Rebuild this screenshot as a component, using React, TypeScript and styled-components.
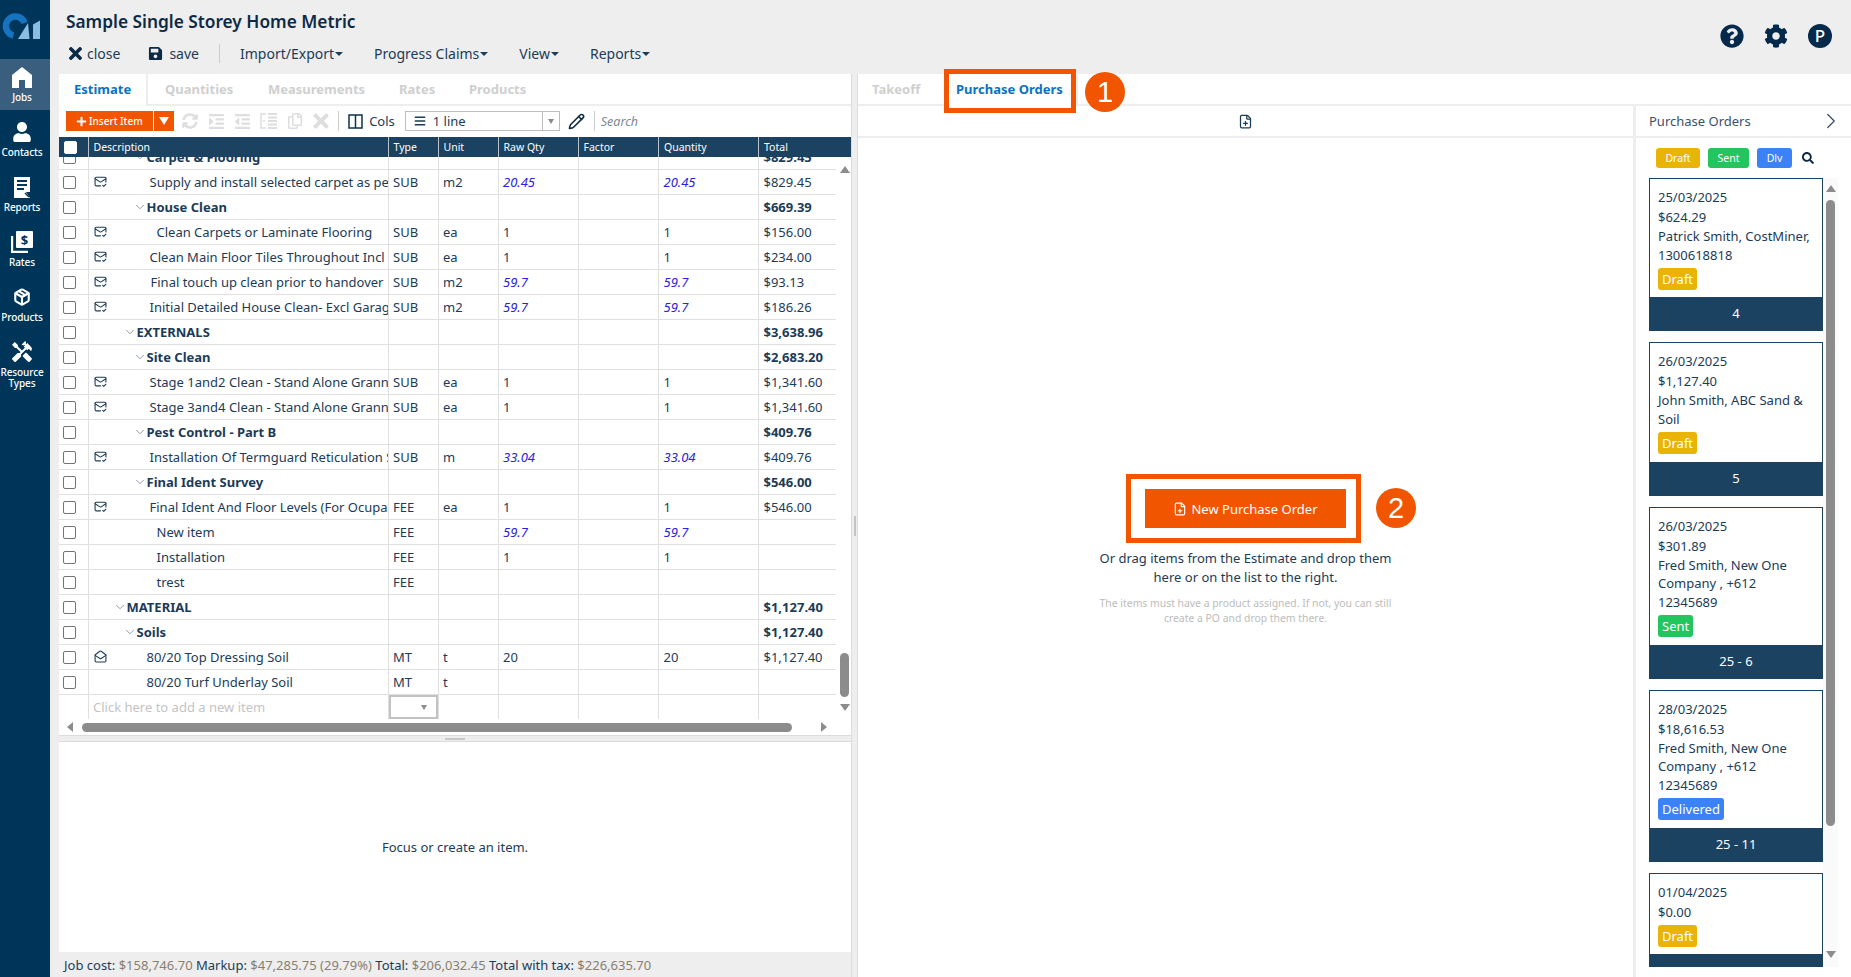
import React from "react";
import styled, { createGlobalStyle } from "styled-components";
import {
  FaBars,
  FaCog,
  FaIndent,
  FaOutdent,
  FaPlus,
  FaQuestionCircle,
  FaRegCopy,
  FaSave,
  FaSearch,
  FaSyncAlt,
  FaTimes,
  FaUser,
} from "react-icons/fa";
import { MdHandyman } from "react-icons/md";
import { ChevronDown, ChevronRight, FilePlus, MailCheck, MailOpen, Package, Pencil } from "lucide-react";

const NAVY = "#10304c";
const HEADER = "#1c4261";
const ORANGE = "#f25500";
const BLUE = "#0c72bf";
const LINE = "#e0e0e0";
const PANEL = "#eeeeee";

const GlobalStyle = createGlobalStyle`
  html, body, #root { margin: 0; padding: 0; height: 100%; }
  body { font-family: "Noto Sans", "Open Sans", sans-serif; color: ${NAVY}; overflow: hidden; }
  * { box-sizing: border-box; }
`;

const Page = styled.div`
  display: flex;
  width: 1851px;
  height: 977px;
  overflow: hidden;
  background: ${PANEL};
`;

/* left navigation */
const Sidebar = styled.nav`
  flex: 0 0 50px;
  background: #00355a;
  display: flex;
  flex-direction: column;
`;
const LogoBox = styled.div`
  height: 59px;
`;
const NavItem = styled.div<{ $active?: boolean }>`
  height: 55px;
  padding: 5px 6px 0 0;
  display: flex;
  flex-direction: column;
  align-items: center;
  color: #fff;
  background: ${({ $active }) => ($active ? "linear-gradient(#3a5e7d 51px, transparent 51px)" : "none")};
`;
const NavIcon = styled.div`
  height: 26px;
  display: flex;
  align-items: center;
  justify-content: center;
`;
const NavLabel = styled.div`
  font-size: 10px;
  line-height: 11px;
  margin-top: 2px;
  text-align: center;
  font-weight: 500;
  letter-spacing: -0.1px;
`;

/* top bar */
const Main = styled.div`
  flex: 1;
  min-width: 0;
  display: flex;
  flex-direction: column;
`;
const TopBar = styled.header`
  flex: 0 0 74px;
  display: flex;
  justify-content: space-between;
  padding: 10px 0 0 16px;
`;
const Title = styled.h1`
  margin: 0;
  font-size: 17.3px;
  line-height: 24px;
  font-weight: 600;
  color: #0d2a45;
`;
const Menu = styled.div`
  display: flex;
  align-items: center;
  margin-top: 7px;
  height: 24px;
  font-size: 14px;
  color: #1c3b57;
`;
const MenuAction = styled.span<{ $gap: number; $iconGap?: number }>`
  display: inline-flex;
  align-items: center;
  gap: ${({ $iconGap }) => $iconGap ?? 6}px;
  margin-right: ${({ $gap }) => $gap}px;
  svg { color: #0d2a45; }
`;
const MenuDivider = styled.span`
  width: 1px;
  height: 19px;
  background: #ccc;
  margin-right: 20px;
`;
const Caret = styled.span`
  display: inline-block;
  width: 0;
  height: 0;
  margin-left: 1px;
  vertical-align: 3px;
  border-left: 4px solid transparent;
  border-right: 4px solid transparent;
  border-top: 4px solid #1c3b57;
`;
const TopIcons = styled.div`
  display: flex;
  gap: 20px;
  padding: 14px 19px 0 0;
  color: #05294a;
`;
const Avatar = styled.div`
  width: 24px;
  height: 24px;
  border-radius: 50%;
  background: #05294a;
  color: #fff;
  font-size: 17px;
  font-weight: 500;
  line-height: 24px;
  text-align: center;
`;

/* panes */
const Body = styled.div`
  flex: 1;
  min-height: 0;
  display: flex;
`;
const LeftPane = styled.section`
  flex: 0 0 792px;
  margin-left: 9px;
  display: flex;
  flex-direction: column;
`;
const PaneSplit = styled.div`
  flex: 0 0 7px;
  display: flex;
  align-items: center;
  justify-content: center;
  border-left: 1px solid #dcdcdc;
  border-right: 1px solid #dcdcdc;
  &::after {
    content: "";
    width: 2px;
    height: 20px;
    background: #c4c4c4;
  }
`;
const RightPane = styled.section`
  flex: 1;
  min-width: 0;
  background: #fff;
  display: flex;
  flex-direction: column;
`;

/* tabs */
const TabStrip = styled.div`
  flex: 0 0 32px;
  min-height: 0;
  display: flex;
  background: #fff;
  border-bottom: 2px solid ${PANEL};
`;
const Tab = styled.div<{ $active?: boolean; $width: number; $pad: number }>`
  position: relative;
  flex: 0 0 ${({ $width }) => $width}px;
  padding-left: ${({ $pad }) => $pad}px;
  height: ${({ $active }) => ($active ? "32px" : "30px")};
  font-size: 13px;
  line-height: 30px;
  font-weight: 700;
  color: ${({ $active }) => ($active ? BLUE : "#cfcfcf")};
  border-right: ${({ $active }) => ($active ? `2px solid ${PANEL}` : "none")};
  background: #fff;
`;
const Highlight = styled.div`
  position: absolute;
  left: 0;
  top: -5px;
  width: 132px;
  height: 44px;
  border: 5px solid ${ORANGE};
`;
const Marker = styled.div`
  position: absolute;
  width: 40px;
  height: 40px;
  border-radius: 50%;
  background: ${ORANGE};
  color: #fff;
  font-family: "Liberation Sans", sans-serif;
  font-weight: 400;
  font-size: 29px;
  line-height: 40px;
  text-align: center;
`;
const TabMarker = styled(Marker)`
  left: 141px;
  top: -2px;
`;

/* estimate toolbar */
const ToolRow = styled.div`
  flex: 0 0 31px;
  display: flex;
  align-items: center;
  padding: 0 0 1px 7px;
  background: #fff;
`;
const InsertButton = styled.button`
  height: 20px;
  width: 87px;
  border: 0;
  padding: 0 0 0 10px;
  background: ${ORANGE};
  color: #fff;
  font-family: inherit;
  font-size: 10px;
  font-weight: 500;
  display: flex;
  align-items: center;
  gap: 2px;
`;
const DropButton = styled.button`
  height: 20px;
  width: 20px;
  margin: 0 3px 0 1px;
  border: 0;
  padding: 0;
  background: ${ORANGE};
  display: flex;
  align-items: center;
  justify-content: center;
  &::after {
    content: "";
    border-left: 5px solid transparent;
    border-right: 5px solid transparent;
    border-top: 8px solid #fff;
  }
`;
const DimIcon = styled.span`
  flex: 0 0 26.2px;
  display: flex;
  justify-content: center;
  color: #dedede;
`;
const ToolDivider = styled.span<{ $left: number; $right: number }>`
  width: 1px;
  height: 20px;
  background: #ccc;
  margin: 0 ${({ $right }) => $right}px 0 ${({ $left }) => $left}px;
`;
const ColsLabel = styled.span`
  font-size: 13px;
  color: #1c3b57;
  margin: 0 10px 0 6px;
`;
const LineSelect = styled.div`
  width: 155px;
  height: 20px;
  border: 1px solid #bdbdbd;
  display: flex;
  align-items: center;
  padding-left: 8px;
  gap: 7px;
  font-size: 13px;
  color: #1c3b57;
`;
const SelectArrow = styled.span`
  margin-left: auto;
  width: 17px;
  height: 100%;
  border-left: 1px solid #bdbdbd;
  display: flex;
  align-items: center;
  justify-content: center;
  &::after {
    content: "";
    border-left: 3px solid transparent;
    border-right: 3px solid transparent;
    border-top: 5px solid #8a8a8a;
  }
`;
const PencilSlot = styled.span`
  display: flex;
  margin: 0 9px 0 8px;
  color: #0d2a45;
`;
const SearchInput = styled.span`
  margin-left: 6px;
  font-size: 12.5px;
  font-style: italic;
  color: #7d8a95;
`;

/* grid */
const COLUMNS = "29.5px 300px 50px 60px 80px 80.5px 100px";

const HeadRow = styled.div`
  flex: 0 0 20px;
  display: grid;
  grid-template-columns: ${COLUMNS} 1fr;
  background: ${HEADER};
  color: #fff;
  font-size: 10.5px;
  line-height: 20px;
`;
const HeadCell = styled.div`
  padding-left: 5px;
  border-right: 1px solid #b9c3cc;
  &:last-child { border-right: 0; }
`;
const HeadCheckCell = styled(HeadCell)`
  padding: 4px 0 0 5px;
`;
const RowsArea = styled.div`
  flex: 0 0 562px;
  display: flex;
  background: #fff;
  overflow: hidden;
`;
const RowsClip = styled.div`
  flex: 0 0 777px;
  overflow: hidden;
`;
const RowsList = styled.div`
  margin-top: -12px;
`;
const Row = styled.div`
  display: grid;
  grid-template-columns: ${COLUMNS} 77px;
  height: 25px;
  border-bottom: 1px solid ${LINE};
`;
const Cell = styled.div<{ $bold?: boolean; $qty?: boolean }>`
  padding-left: 4.5px;
  border-right: 1px solid ${LINE};
  font-size: 13px;
  line-height: 24px;
  white-space: nowrap;
  overflow: hidden;
  color: ${({ $qty }) => ($qty ? "#2a22e0" : "#1c3b57")};
  font-style: ${({ $qty }) => ($qty ? "italic" : "normal")};
  font-weight: ${({ $bold }) => ($bold ? 700 : 400)};
  &:last-child { border-right: 0; }
`;
const CheckCell = styled(Cell)`
  padding: 6px 0 0 4px;
`;
const Check = styled.span<{ $filled?: boolean }>`
  display: block;
  width: 13px;
  height: 13px;
  border-radius: 2px;
  background: #fff;
  border: 1px solid ${({ $filled }) => ($filled ? "#fff" : "#6f7478")};
`;
const DescCell = styled(Cell)`
  display: flex;
  padding-left: 0;
`;
const MailSlot = styled.span`
  flex: 0 0 24px;
  padding: 5px 0 0 5px;
  color: #1c3b57;
  display: flex;
  align-items: flex-start;
`;
const DescText = styled.span<{ $x: number; $group?: boolean }>`
  padding-left: ${({ $x, $group }) => $x - 24 - ($group ? 12 : 0)}px;
  display: inline-flex;
  align-items: center;
`;
const TreeToggle = styled.span`
  flex: 0 0 12px;
  width: 12px;
  margin-left: -2px;
  margin-right: 2px;
  display: flex;
  color: #6d7e8c;
  svg { flex: none; }
`;
const EditorCell = styled(Cell)`
  padding-left: 0;
`;
const Placeholder = styled.span`
  color: #c4c4c4;
`;
const TypeEditor = styled.div`
  height: 24px;
  border: 2px solid #c2c2c2;
  display: flex;
  align-items: center;
  justify-content: flex-end;
  padding-right: 9px;
  &::after {
    content: "";
    border-left: 3px solid transparent;
    border-right: 3px solid transparent;
    border-top: 5px solid #8a8a8a;
  }
`;
const VTrack = styled.div`
  flex: 0 0 15px;
  display: flex;
  flex-direction: column;
  align-items: center;
  padding-left: 2px;
`;
const ArrowUp = styled.span<{ $top: number }>`
  margin-top: ${({ $top }) => $top}px;
  border-left: 5px solid transparent;
  border-right: 5px solid transparent;
  border-bottom: 7px solid #8c8c8c;
`;
const ArrowDown = styled.span<{ $top: number }>`
  margin-top: ${({ $top }) => $top}px;
  border-left: 5px solid transparent;
  border-right: 5px solid transparent;
  border-top: 7px solid #8c8c8c;
`;
const VThumb = styled.span<{ $top: number; $height: number }>`
  margin-top: ${({ $top }) => $top}px;
  width: 9px;
  height: ${({ $height }) => $height}px;
  border-radius: 5px;
  background: #8c8c8c;
`;
const HTrack = styled.div`
  flex: 0 0 17px;
  display: flex;
  align-items: center;
  background: #fff;
  padding-left: 8px;
  border-bottom: 1px solid #dcdcdc;
`;
const ArrowLeft = styled.span`
  border-top: 5px solid transparent;
  border-bottom: 5px solid transparent;
  border-right: 6px solid #8c8c8c;
`;
const HThumb = styled.span`
  width: 710px;
  height: 9px;
  margin-left: 9px;
  border-radius: 5px;
  background: #8c8c8c;
`;
const ArrowRight = styled.span`
  margin-left: 29px;
  border-top: 5px solid transparent;
  border-bottom: 5px solid transparent;
  border-left: 6px solid #8c8c8c;
`;
const RowSplit = styled.div`
  flex: 0 0 6px;
  display: flex;
  align-items: center;
  justify-content: center;
  border-bottom: 1px solid #dcdcdc;
  &::after {
    content: "";
    width: 20px;
    height: 2px;
    background: #c8c8c8;
  }
`;
const Detail = styled.div`
  flex: 0 0 210px;
  background: #fff;
  display: flex;
  align-items: center;
  justify-content: center;
  font-size: 13px;
  color: #1c3b57;
`;
const Totals = styled.footer`
  flex: 1;
  padding: 2px 0 0 5px;
  font-size: 13px;
  line-height: 22px;
  color: #1c3b57;
  white-space: pre;
`;
const Amount = styled.span`
  color: #887f72;
`;

/* purchase orders */
const OrdersBody = styled.div`
  flex: 1;
  min-height: 0;
  display: flex;
`;
const Center = styled.div`
  flex: 0 0 775px;
  display: flex;
  flex-direction: column;
`;
const CenterBar = styled.div`
  flex: 0 0 32px;
  display: flex;
  align-items: center;
  justify-content: center;
  border-bottom: 2px solid ${PANEL};
  color: #1c3b57;
`;
const DropArea = styled.div`
  display: flex;
  flex-direction: column;
  align-items: center;
  padding-top: 336px;
  text-align: center;
`;
const ButtonFrame = styled.div`
  position: relative;
  width: 235px;
  height: 69px;
  margin-left: -4px;
  padding-left: 14px;
  border: 5px solid ${ORANGE};
  display: flex;
  align-items: center;
`;
const FrameMarker = styled(Marker)`
  left: 245px;
  top: 9px;
`;
const NewOrderButton = styled.button`
  width: 201px;
  height: 39px;
  border: 0;
  background: ${ORANGE};
  color: #fff;
  font-family: inherit;
  font-size: 13px;
  display: flex;
  align-items: center;
  justify-content: center;
  gap: 4px;
`;
const DropHint = styled.p`
  margin: 6px 0 0;
  width: 300px;
  font-size: 13px;
  line-height: 19px;
  color: #1c3b57;
`;
const DropNote = styled.p`
  margin: 9px 0 0;
  width: 300px;
  font-size: 10.4px;
  line-height: 15px;
  color: #bcbcbc;
`;
const OrdersColumn = styled.aside`
  flex: 1;
  min-width: 0;
  border-left: 3px solid ${PANEL};
  display: flex;
  flex-direction: column;
`;
const OrdersTitle = styled.div`
  flex: 0 0 32px;
  display: flex;
  align-items: center;
  justify-content: space-between;
  padding: 0 7px 0 13px;
  border-bottom: 2px solid ${PANEL};
  font-size: 13px;
  color: #3a5269;
`;
const FilterRow = styled.div`
  flex: 0 0 40px;
  display: flex;
  align-items: flex-start;
  gap: 8px;
  padding: 10px 0 0 20px;
`;
const FilterPill = styled.span<{ $bg: string; $width: number }>`
  width: ${({ $width }) => $width}px;
  height: 20px;
  border-radius: 3px;
  background: ${({ $bg }) => $bg};
  color: #fff;
  font-size: 10.5px;
  line-height: 20px;
  text-align: center;
`;
const FilterSearch = styled.span`
  display: flex;
  color: #0d2a45;
  margin: 4px 0 0 2px;
`;
const ListArea = styled.div`
  flex: 0 0 789px;
  display: flex;
  overflow: hidden;
`;
const CardStack = styled.div`
  flex: 0 0 174px;
  margin-left: 13px;
  display: flex;
  flex-direction: column;
  gap: 11px;
`;
const Card = styled.article`
  flex: 0 0 auto;
  border: 1px solid ${HEADER};
  font-size: 13px;
  color: #1c3b57;
`;
const CardBody = styled.div`
  padding: 8px 8px 7.4px;
`;
const CardLine = styled.div`
  line-height: 20px;
`;
const CardMulti = styled.div`
  line-height: 18.7px;
`;
const Status = styled.span<{ $bg: string }>`
  display: block;
  width: fit-content;
  margin-top: 3.5px;
  height: 22px;
  padding: 0 4px;
  border-radius: 3px;
  background: ${({ $bg }) => $bg};
  color: #fff;
  font-size: 13px;
  line-height: 22px;
`;
const CardFoot = styled.div`
  height: 33px;
  background: ${HEADER};
  color: #fff;
  font-size: 13px;
  line-height: 33px;
  text-align: center;
`;
const ListScroll = styled(VTrack)`
  flex: 0 0 15px;
  padding-left: 0;
  background: #fafafa;
`;

const YELLOW = "#eab308";
const GREEN = "#22c55e";
const SKY = "#3b82f6";

type EstimateRow = {
  text: string;
  x: number;
  group?: boolean;
  mail?: "check" | "open";
  type?: string;
  unit?: string;
  raw?: string;
  qty?: string;
  total?: string;
  italic?: boolean;
};

const rows: EstimateRow[] = [
  { text: "Carpet & Flooring", x: 58, group: true, total: "$829.45" },
  { text: "Supply and install selected carpet as per", x: 61, mail: "check", type: "SUB", unit: "m2", raw: "20.45", qty: "20.45", total: "$829.45", italic: true },
  { text: "House Clean", x: 58, group: true, total: "$669.39" },
  { text: "Clean Carpets or Laminate Flooring", x: 68, mail: "check", type: "SUB", unit: "ea", raw: "1", qty: "1", total: "$156.00" },
  { text: "Clean Main Floor Tiles Throughout Incl", x: 61, mail: "check", type: "SUB", unit: "ea", raw: "1", qty: "1", total: "$234.00" },
  { text: "Final touch up clean prior to handover", x: 62, mail: "check", type: "SUB", unit: "m2", raw: "59.7", qty: "59.7", total: "$93.13", italic: true },
  { text: "Initial Detailed House Clean- Excl Garage", x: 61, mail: "check", type: "SUB", unit: "m2", raw: "59.7", qty: "59.7", total: "$186.26", italic: true },
  { text: "EXTERNALS", x: 48, group: true, total: "$3,638.96" },
  { text: "Site Clean", x: 58, group: true, total: "$2,683.20" },
  { text: "Stage 1and2 Clean - Stand Alone Granny Flat", x: 61, mail: "check", type: "SUB", unit: "ea", raw: "1", qty: "1", total: "$1,341.60" },
  { text: "Stage 3and4 Clean - Stand Alone Granny Flat", x: 61, mail: "check", type: "SUB", unit: "ea", raw: "1", qty: "1", total: "$1,341.60" },
  { text: "Pest Control - Part B", x: 58, group: true, total: "$409.76" },
  { text: "Installation Of Termguard Reticulation System", x: 61, mail: "check", type: "SUB", unit: "m", raw: "33.04", qty: "33.04", total: "$409.76", italic: true },
  { text: "Final Ident Survey", x: 58, group: true, total: "$546.00" },
  { text: "Final Ident And Floor Levels (For Ocupancy)", x: 61, mail: "check", type: "FEE", unit: "ea", raw: "1", qty: "1", total: "$546.00" },
  { text: "New item", x: 68, type: "FEE", raw: "59.7", qty: "59.7", italic: true },
  { text: "Installation", x: 68, type: "FEE", raw: "1", qty: "1" },
  { text: "trest", x: 68, type: "FEE" },
  { text: "MATERIAL", x: 38, group: true, total: "$1,127.40" },
  { text: "Soils", x: 48, group: true, total: "$1,127.40" },
  { text: "80/20 Top Dressing Soil", x: 58, mail: "open", type: "MT", unit: "t", raw: "20", qty: "20", total: "$1,127.40" },
  { text: "80/20 Turf Underlay Soil", x: 58, type: "MT", unit: "t" },
];

const orders = [
  { date: "25/03/2025", amount: "$624.29", lines: ["Patrick Smith, CostMiner,", "1300618818"], status: "Draft", color: YELLOW, no: "4" },
  { date: "26/03/2025", amount: "$1,127.40", lines: ["John Smith, ABC Sand &", "Soil"], status: "Draft", color: YELLOW, no: "5" },
  { date: "26/03/2025", amount: "$301.89", lines: ["Fred Smith, New One", "Company , +612", "12345689"], status: "Sent", color: GREEN, no: "25 - 6" },
  { date: "28/03/2025", amount: "$18,616.53", lines: ["Fred Smith, New One", "Company , +612", "12345689"], status: "Delivered", color: SKY, no: "25 - 11" },
  { date: "01/04/2025", amount: "$0.00", lines: [], status: "Draft", color: YELLOW, no: "" },
];

const Logo = () => (
  <svg width="44" height="44" viewBox="0 0 44 44">
    <path d="M13.5 35.3 A9.5 9.5 0 1 1 24.5 23" fill="none" stroke="#1673c0" strokeWidth="6.5" />
    <path d="M18 39 L28 23 L29.5 39 Z" fill="#8cbce4" />
    <path d="M33 39 V24.5 L40 20.5 V39 Z" fill="#8cbce4" />
  </svg>
);

const HomeIcon = () => (
  <svg width="20" height="21" viewBox="0 0 20 21">
    <path d="M10 0 L20 8 V21 H13 V13 H7 V21 H0 V8 Z" fill="#fff" />
  </svg>
);

const ReportsIcon = () => (
  <svg width="18" height="21" viewBox="0 0 18 21">
    <path d="M1 0 H17 V15 L13 15 L17 21 H1 Z" fill="#fff" />
    <path d="M4 4 H14 M4 8 H14 M4 12 H11" stroke="#00355a" strokeWidth="2" />
    <path d="M12 16 L16 20" stroke="#00355a" strokeWidth="1.5" />
  </svg>
);

const RatesIcon = () => (
  <svg width="23" height="22" viewBox="0 0 23 22">
    <path d="M1 5 V21 H17" fill="none" stroke="#fff" strokeWidth="2.4" />
    <rect x="5" y="0" width="17" height="17" rx="1" fill="#fff" />
    <text x="13.5" y="13.5" textAnchor="middle" fontSize="13" fontWeight="700" fill="#00355a" fontFamily="Noto Sans">$</text>
  </svg>
);

const ListLinesIcon = () => (
  <svg width="18" height="16" viewBox="0 0 18 16">
    <path d="M6 1 H1 V15 H6 M3 8 H5" fill="none" stroke="currentColor" strokeWidth="1.5" />
    <path d="M8 1 H17 M8 4.5 H17 M8 8 H17 M8 11.5 H17 M8 15 H17" stroke="currentColor" strokeWidth="2" />
  </svg>
);

const ColumnsIcon = () => (
  <svg width="15" height="15" viewBox="0 0 15 15">
    <rect x="1" y="1" width="13" height="13" fill="none" stroke="#10304c" strokeWidth="1.5" />
    <path d="M7.5 1 V14" stroke="#10304c" strokeWidth="1.5" />
  </svg>
);

const EstimateLine = ({ row }: { row: EstimateRow }) => (
  <Row>
    <CheckCell>
      <Check />
    </CheckCell>
    <DescCell $bold={row.group}>
      <MailSlot>
        {row.mail === "check" && <MailCheck size={13} strokeWidth={2} />}
        {row.mail === "open" && <MailOpen size={13} strokeWidth={2} />}
      </MailSlot>
      <DescText $x={row.x} $group={row.group}>
        {row.group && (
          <TreeToggle>
            <ChevronDown size={14} strokeWidth={1.3} />
          </TreeToggle>
        )}
        {row.text}
      </DescText>
    </DescCell>
    <Cell>{row.type}</Cell>
    <Cell>{row.unit}</Cell>
    <Cell $qty={row.italic}>{row.raw}</Cell>
    <Cell />
    <Cell $qty={row.italic}>{row.qty}</Cell>
    <Cell $bold={row.group}>{row.total}</Cell>
  </Row>
);

export default function App() {
  return (
    <Page>
      <GlobalStyle />
      <Sidebar>
        <LogoBox>
          <Logo />
        </LogoBox>
        <NavItem $active>
          <NavIcon>
            <HomeIcon />
          </NavIcon>
          <NavLabel>Jobs</NavLabel>
        </NavItem>
        <NavItem>
          <NavIcon>
            <FaUser size={20} />
          </NavIcon>
          <NavLabel>Contacts</NavLabel>
        </NavItem>
        <NavItem>
          <NavIcon>
            <ReportsIcon />
          </NavIcon>
          <NavLabel>Reports</NavLabel>
        </NavItem>
        <NavItem>
          <NavIcon>
            <RatesIcon />
          </NavIcon>
          <NavLabel>Rates</NavLabel>
        </NavItem>
        <NavItem>
          <NavIcon>
            <Package size={18} strokeWidth={2.8} />
          </NavIcon>
          <NavLabel>Products</NavLabel>
        </NavItem>
        <NavItem>
          <NavIcon>
            <MdHandyman size={24} />
          </NavIcon>
          <NavLabel>
            Resource
            <br />
            Types
          </NavLabel>
        </NavItem>
      </Sidebar>

      <Main>
        <TopBar>
          <div>
            <Title>Sample Single Storey Home Metric</Title>
            <Menu>
              <MenuAction $gap={28} $iconGap={2}>
                <FaTimes size={19} />
                close
              </MenuAction>
              <MenuAction $gap={20}>
                <FaSave size={15} />
                save
              </MenuAction>
              <MenuDivider />
              <MenuAction $gap={31}>
                <span>
                  Import/Export
                  <Caret />
                </span>
              </MenuAction>
              <MenuAction $gap={31}>
                <span>
                  Progress Claims
                  <Caret />
                </span>
              </MenuAction>
              <MenuAction $gap={31}>
                <span>
                  View
                  <Caret />
                </span>
              </MenuAction>
              <MenuAction $gap={0}>
                <span>
                  Reports
                  <Caret />
                </span>
              </MenuAction>
            </Menu>
          </div>
          <TopIcons>
            <FaQuestionCircle size={24} />
            <FaCog size={24} />
            <Avatar>P</Avatar>
          </TopIcons>
        </TopBar>

        <Body>
          <LeftPane>
            <TabStrip>
              <Tab $active $width={89} $pad={15}>
                Estimate
              </Tab>
              <Tab $width={103} $pad={17}>
                Quantities
              </Tab>
              <Tab $width={131} $pad={17}>
                Measurements
              </Tab>
              <Tab $width={70} $pad={17}>
                Rates
              </Tab>
              <Tab $width={100} $pad={17}>
                Products
              </Tab>
            </TabStrip>
            <ToolRow>
              <InsertButton>
                <FaPlus size={11} />
                Insert Item
              </InsertButton>
              <DropButton />
              <DimIcon>
                <FaSyncAlt size={16} />
              </DimIcon>
              <DimIcon>
                <FaIndent size={17} />
              </DimIcon>
              <DimIcon>
                <FaOutdent size={17} />
              </DimIcon>
              <DimIcon>
                <ListLinesIcon />
              </DimIcon>
              <DimIcon>
                <FaRegCopy size={16} />
              </DimIcon>
              <DimIcon>
                <FaTimes size={22} />
              </DimIcon>
              <ToolDivider $left={4} $right={9} />
              <ColumnsIcon />
              <ColsLabel>Cols</ColsLabel>
              <LineSelect>
                <FaBars size={12} />1 line
                <SelectArrow />
              </LineSelect>
              <PencilSlot>
                <Pencil size={17} strokeWidth={2.2} />
              </PencilSlot>
              <ToolDivider $left={0} $right={0} />
              <SearchInput>Search</SearchInput>
            </ToolRow>

            <HeadRow>
              <HeadCheckCell>
                <Check $filled />
              </HeadCheckCell>
              <HeadCell>Description</HeadCell>
              <HeadCell>Type</HeadCell>
              <HeadCell>Unit</HeadCell>
              <HeadCell>Raw Qty</HeadCell>
              <HeadCell>Factor</HeadCell>
              <HeadCell>Quantity</HeadCell>
              <HeadCell>Total</HeadCell>
            </HeadRow>
            <RowsArea>
              <RowsClip>
                <RowsList>
                  {rows.map((row, index) => (
                    <EstimateLine key={`row-${index}`} row={row} />
                  ))}
                  <Row>
                    <Cell />
                    <Cell>
                      <Placeholder>Click here to add a new item</Placeholder>
                    </Cell>
                    <EditorCell>
                      <TypeEditor />
                    </EditorCell>
                    <Cell />
                    <Cell />
                    <Cell />
                    <Cell />
                    <Cell />
                  </Row>
                </RowsList>
              </RowsClip>
              <VTrack>
                <ArrowUp $top={9} />
                <VThumb $top={480} $height={44} />
                <ArrowDown $top={7} />
              </VTrack>
            </RowsArea>
            <HTrack>
              <ArrowLeft />
              <HThumb />
              <ArrowRight />
            </HTrack>
            <RowSplit />
            <Detail>Focus or create an item.</Detail>
            <Totals>
              Job cost: <Amount>$158,746.70</Amount> Markup: <Amount>$47,285.75 (29.79%)</Amount> Total:{" "}
              <Amount>$206,032.45</Amount> Total with tax: <Amount>$226,635.70</Amount>
            </Totals>
          </LeftPane>
          <PaneSplit />
          <RightPane>
            <TabStrip>
              <Tab $width={86} $pad={14}>
                Takeoff
              </Tab>
              <Tab $active $width={134} $pad={12}>
                Purchase Orders
                <Highlight />
                <TabMarker>1</TabMarker>
              </Tab>
            </TabStrip>
            <OrdersBody>
              <Center>
                <CenterBar>
                  <FilePlus size={15} strokeWidth={2} />
                </CenterBar>
                <DropArea>
                  <ButtonFrame>
                    <NewOrderButton>
                      <FilePlus size={14} strokeWidth={2} />
                      New Purchase Order
                    </NewOrderButton>
                    <FrameMarker>2</FrameMarker>
                  </ButtonFrame>
                  <DropHint>Or drag items from the Estimate and drop them here or on the list to the right.</DropHint>
                  <DropNote>The items must have a product assigned. If not, you can still create a PO and drop them there.</DropNote>
                </DropArea>
              </Center>
              <OrdersColumn>
                <OrdersTitle>
                  Purchase Orders
                  <ChevronRight size={26} strokeWidth={1.2} />
                </OrdersTitle>
                <FilterRow>
                  <FilterPill $bg={YELLOW} $width={44}>
                    Draft
                  </FilterPill>
                  <FilterPill $bg={GREEN} $width={41}>
                    Sent
                  </FilterPill>
                  <FilterPill $bg={SKY} $width={35}>
                    Dlv
                  </FilterPill>
                  <FilterSearch>
                    <FaSearch size={12} />
                  </FilterSearch>
                </FilterRow>
                <ListArea>
                  <CardStack>
                    {orders.map((order, index) => (
                      <Card key={`order-${index}`}>
                        <CardBody>
                          <CardLine>{order.date}</CardLine>
                          <CardLine>{order.amount}</CardLine>
                          {order.lines.map((line) => (
                            <CardMulti key={line}>{line}</CardMulti>
                          ))}
                          <Status $bg={order.color}>{order.status}</Status>
                        </CardBody>
                        <CardFoot>{order.no}</CardFoot>
                      </Card>
                    ))}
                  </CardStack>
                  <ListScroll>
                    <ArrowUp $top={7} />
                    <VThumb $top={8} $height={626} />
                    <ArrowDown $top={125} />
                  </ListScroll>
                </ListArea>
              </OrdersColumn>
            </OrdersBody>
          </RightPane>
        </Body>
      </Main>
    </Page>
  );
}
